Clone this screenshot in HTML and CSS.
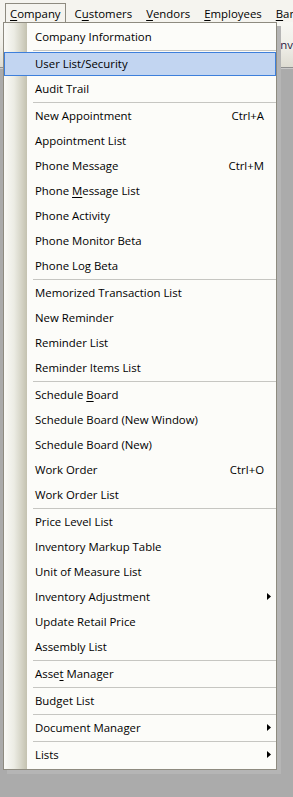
FILE: index.html
```html
<!DOCTYPE html>
<html>
<head>
<meta charset="utf-8">
<link rel="stylesheet" href="styles.css">
</head>
<body>
<div class="menubar">
  <span class="mb-item active"><u>C</u>ompany</span>
  <span class="mb-item">C<u>u</u>stomers</span>
  <span class="mb-item"><u>V</u>endors</span>
  <span class="mb-item"><u>E</u>mployees</span>
  <span class="mb-item"><u>B</u>anking</span>
</div>
<div class="toolbar">
  <span class="tb-text">Invoice</span>
</div>
<div class="workspace"></div>

<div class="dropdown">
  <div class="item"><span>Company Information</span></div>
  <div class="sep"></div>
  <div class="item hl"><span>User List/Security</span></div>
  <div class="item"><span>Audit Trail</span></div>
  <div class="sep"></div>
  <div class="item"><span>New Appointment</span><span class="key">Ctrl+A</span></div>
  <div class="item"><span>Appointment List</span></div>
  <div class="item"><span>Phone Message</span><span class="key">Ctrl+M</span></div>
  <div class="item"><span>Phone <u>M</u>essage List</span></div>
  <div class="item"><span>Phone Activity</span></div>
  <div class="item"><span>Phone Monitor Beta</span></div>
  <div class="item"><span>Phone Log Beta</span></div>
  <div class="sep"></div>
  <div class="item"><span>Memorized Transaction List</span></div>
  <div class="item"><span>New Reminder</span></div>
  <div class="item"><span>Reminder List</span></div>
  <div class="item"><span>Reminder Items List</span></div>
  <div class="sep"></div>
  <div class="item"><span>Schedule <u>B</u>oard</span></div>
  <div class="item"><span>Schedule Board (New Window)</span></div>
  <div class="item"><span>Schedule Board (New)</span></div>
  <div class="item"><span>Work Order</span><span class="key">Ctrl+O</span></div>
  <div class="item"><span>Work Order List</span></div>
  <div class="sep"></div>
  <div class="item"><span>Price Level List</span></div>
  <div class="item"><span>Inventory Markup Table</span></div>
  <div class="item"><span>Unit of Measure List</span></div>
  <div class="item sub"><span>Inventory Adjustment</span><svg class="arrow" width="4" height="7" viewBox="0 0 4 7"><polygon points="0,0 4,3.5 0,7" fill="#000"/></svg></div>
  <div class="item"><span>Update Retail Price</span></div>
  <div class="item"><span>Assembly List</span></div>
  <div class="sep"></div>
  <div class="item"><span>Asse<u>t</u> Manager</span></div>
  <div class="sep"></div>
  <div class="item"><span>Budget List</span></div>
  <div class="sep"></div>
  <div class="item sub"><span>Document Manager</span><svg class="arrow" width="4" height="7" viewBox="0 0 4 7"><polygon points="0,0 4,3.5 0,7" fill="#000"/></svg></div>
  <div class="sep"></div>
  <div class="item sub"><span>Lists</span><svg class="arrow" width="4" height="7" viewBox="0 0 4 7"><polygon points="0,0 4,3.5 0,7" fill="#000"/></svg></div>
</div>
</body>
</html>
```

FILE: styles.css
```css
html, body {
  margin: 0;
  padding: 0;
}
body {
  width: 293px;
  height: 797px;
  overflow: hidden;
  background: #ababab;
  font-family: "Open Sans", "Liberation Sans", sans-serif;
  font-size: 11.4px;
  color: #000;
  position: relative;
}
u {
  text-decoration: underline;
  text-underline-offset: 2px;
  text-decoration-thickness: 1px;
}
.menubar {
  height: 22px;
  background: #f5f4ef;
  display: flex;
  align-items: flex-start;
  gap: 4px;
  padding-left: 5px;
  box-sizing: border-box;
  white-space: nowrap;
  overflow: hidden;
}
.mb-item {
  margin-top: 3px;
  height: 19px;
  box-sizing: border-box;
  padding: 0 4px;
  border: 1px solid transparent;
  border-bottom: none;
  display: flex;
  align-items: center;
  font-size: 11.4px;
  color: #000;
}
.mb-item.active {
  border-color: #8e8b80;
  position: relative;
  z-index: 2;
  background: #f5f4ef;
}
.mb-item.active::after {
  content: "";
  position: absolute;
  left: 0;
  right: 0;
  bottom: -1px;
  height: 1px;
  background: #f5f4ef;
}
.toolbar {
  height: 46px;
  box-sizing: border-box;
  background: linear-gradient(#f7f7f3, #f0efe9 50%, #dedcd2);
  border-bottom: 1px solid #8f8f8f;
  box-shadow: 0 1px 0 #c9c9c9;
  padding-left: 277px;
  padding-top: 15px;
  white-space: nowrap;
  overflow: hidden;
}
.tb-text {
  color: #2a1740;
  font-size: 11.4px;
}
.dropdown {
  position: absolute;
  top: 22px;
  left: 3px;
  width: 272px;
  border: 1px solid #8e8b80;
  padding: 1px 0 2px;
  background:
    linear-gradient(to right, #fafaf7 0px, #ecece4 10px, #c4c2b0 23px, #fcfcf9 23px);
  box-shadow: 4px 4px 0 #b5b5b5;
  z-index: 1;
}
.item {
  height: 25px;
  box-sizing: border-box;
  display: flex;
  align-items: center;
  justify-content: space-between;
  padding-left: 31px;
  padding-right: 12px;
  white-space: nowrap;
}
.item.sub {
  padding-right: 5px;
}
.item.hl {
  border-top: 1px solid transparent;
  background: #c2d5f1;
  background-clip: padding-box;
  box-shadow: inset 0 0 0 1px #3d7fdb;
  padding-bottom: 1px;
}
.key {
  color: #000;
}
.arrow {
  display: block;
}
.sep {
  height: 2px;
  box-sizing: border-box;
  margin-left: 29px;
  border-bottom: 1px solid #c6c6c2;
}
```
